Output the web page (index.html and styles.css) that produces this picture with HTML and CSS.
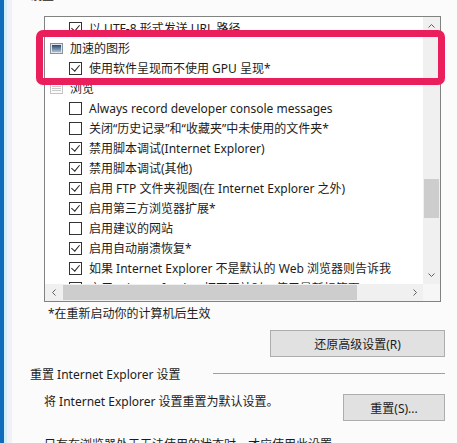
FILE: index.html
```html
<!DOCTYPE html>
<html lang="zh-CN">

<head>
    <meta charset="UTF-8">
    <meta name="viewport" content="width=device-width, initial-scale=1.0">
    <title>Internet 选项 - 高级</title>
    <link rel="stylesheet" href="styles.css">
</head>

<body>
    <div class="screen">
        <div class="desk-edge"></div>

        <div class="dialog">
            <div class="group-label">设置</div>

            <!-- Settings list -->
            <div class="listbox">
                <div class="list">
                    <div class="row item"><span class="box checked"></span>以 UTF-8 形式发送 URL 路径</div>
                    <div class="row group">
                        <svg class="group-icon" width="13" height="11" viewBox="0 0 13 11">
                            <defs>
                                <linearGradient id="scr" x1="0" y1="0" x2="0" y2="1">
                                    <stop offset="0" stop-color="#2c4866" />
                                    <stop offset="1" stop-color="#a9bfd3" />
                                </linearGradient>
                            </defs>
                            <rect x="0.5" y="0.5" width="12" height="10" fill="#dfe5ea" stroke="#8393a2" />
                            <rect x="2" y="2" width="9" height="7" fill="url(#scr)" />
                        </svg>
                        加速的图形
                    </div>
                    <div class="row item"><span class="box checked"></span>使用软件呈现而不使用 GPU 呈现*</div>
                    <div class="row group">
                        <svg class="group-icon" width="13" height="11" viewBox="0 0 13 11">
                            <rect x="0.5" y="0.5" width="12" height="10" fill="#fafafa" stroke="#c4c4c4" />
                            <path d="M2 3.5h9M2 5.5h9M2 7.5h9" stroke="#c9c9c9" />
                        </svg>
                        浏览
                    </div>
                    <div class="row item"><span class="box"></span>Always record developer console messages</div>
                    <div class="row item"><span class="box"></span>关闭“历史记录”和“收藏夹”中未使用的文件夹*</div>
                    <div class="row item"><span class="box checked"></span>禁用脚本调试(Internet Explorer)</div>
                    <div class="row item"><span class="box checked"></span>禁用脚本调试(其他)</div>
                    <div class="row item"><span class="box checked"></span>启用 FTP 文件夹视图(在 Internet Explorer 之外)</div>
                    <div class="row item"><span class="box checked"></span>启用第三方浏览器扩展*</div>
                    <div class="row item"><span class="box"></span>启用建议的网站</div>
                    <div class="row item"><span class="box checked"></span>启用自动崩溃恢复*</div>
                    <div class="row item"><span class="box checked"></span>如果 Internet Explorer 不是默认的 Web 浏览器则告诉我</div>
                    <div class="row item"><span class="box"></span>启用 Microsoft Edge 打开网站时，使用最新标签页</div>
                </div>

                <div class="vscroll">
                    <svg class="arrow" width="7" height="4" viewBox="0 0 7 4"><path d="M0.5 3.5L3.5 0.5L6.5 3.5" fill="none" stroke="#606060" /></svg>
                    <div class="vtrack"><div class="vthumb"></div></div>
                    <svg class="arrow" width="7" height="4" viewBox="0 0 7 4"><path d="M0.5 0.5L3.5 3.5L6.5 0.5" fill="none" stroke="#606060" /></svg>
                </div>

                <div class="hscroll">
                    <svg class="arrow" width="4" height="7" viewBox="0 0 4 7"><path d="M3.5 0.5L0.5 3.5L3.5 6.5" fill="none" stroke="#606060" /></svg>
                    <div class="htrack"><div class="hthumb"></div></div>
                    <svg class="arrow" width="4" height="7" viewBox="0 0 4 7"><path d="M0.5 0.5L3.5 3.5L0.5 6.5" fill="none" stroke="#606060" /></svg>
                </div>

                <div class="corner"></div>

                <!-- highlight annotation -->
                <div class="highlight"></div>
            </div>

            <p class="note">*在重新启动你的计算机后生效</p>

            <div class="restore-row">
                <button class="btn btn-wide">还原高级设置(R)</button>
            </div>

            <div class="section-head">
                <span>重置 Internet Explorer 设置</span>
                <span class="rule"></span>
            </div>

            <div class="reset-row">
                <p>将 Internet Explorer 设置重置为默认设置。</p>
                <button class="btn btn-reset">重置(S)...</button>
            </div>

            <p class="hint">只有在浏览器处于无法使用的状态时，才应使用此设置。</p>
        </div>
    </div>
</body>

</html>
```

FILE: styles.css
```css
body {
    margin: 0;
    font-family: 'Noto Sans', 'Noto Sans CJK SC', sans-serif;
    font-size: 12px;
    color: #1c1c1c;
    background-color: #fbfbfb;
}

p {
    margin: 0;
}

.screen {
    display: flex;
    height: 443px;
    overflow: hidden;
}

.desk-edge {
    width: 12px;
    flex-shrink: 0;
    background: linear-gradient(to right, #0f6cbd 0 4px, #d4eef7 4px 7px, #f1eff8 7px 12px);
}

.dialog {
    flex: 1;
    padding: 0 12px 0 18px;
}

.group-label {
    margin-top: -12px;
    height: 16px;
    line-height: 16px;
}

/* list box */
.listbox {
    position: relative;
    margin: 12px 0 0 14px;
    width: 397px;
    height: 286px;
    box-sizing: border-box;
    border: 1px solid #828282;
    background-color: #ffffff;
    display: grid;
    grid-template-columns: 1fr 17px;
    grid-template-rows: 1fr 17px;
}

.list {
    overflow: hidden;
    padding-top: 1px;
    white-space: nowrap;
}

.row {
    height: 20px;
    display: flex;
    align-items: center;
    gap: 7px;
}

.row.item {
    padding-left: 24px;
}

.row.group {
    padding-left: 5px;
}

.box {
    width: 13px;
    height: 13px;
    box-sizing: border-box;
    border: 1px solid #333333;
    background-color: #ffffff;
    flex-shrink: 0;
    position: relative;
}

.box.checked::after {
    content: '';
    position: absolute;
    left: 3px;
    top: 0px;
    width: 4px;
    height: 7px;
    border: solid #222222;
    border-width: 0 1px 1px 0;
    transform: rotate(40deg);
}

.group-icon {
    flex-shrink: 0;
}

/* scrollbars */
.vscroll {
    background-color: #f0f0f0;
    display: flex;
    flex-direction: column;
    align-items: center;
}

.vscroll .arrow {
    margin: 7px 0;
}

.vtrack {
    flex: 1;
    width: 100%;
    position: relative;
}

.vthumb {
    position: absolute;
    left: 1px;
    right: 1px;
    top: 144px;
    height: 39px;
    background-color: #cdcdcd;
}

.hscroll {
    background-color: #f0f0f0;
    display: flex;
    align-items: center;
}

.hscroll .arrow {
    margin: 0 6px 0 7px;
}

.htrack {
    flex: 1;
    height: 100%;
    display: flex;
    align-items: center;
}

.hthumb {
    margin-left: 1px;
    width: 294px;
    height: 15px;
    background-color: #cdcdcd;
}

.corner {
    background-color: #f6f6f6;
}

.highlight {
    position: absolute;
    left: -9px;
    top: 13px;
    width: 409px;
    height: 55px;
    box-sizing: border-box;
    border: 7px solid #e91e5b;
    border-radius: 7px;
}

.note {
    margin: 4px 0 0 18px;
    line-height: 16px;
}

.restore-row {
    display: flex;
    justify-content: flex-end;
    margin-top: 8px;
}

.btn {
    font-family: inherit;
    font-size: 12px;
    color: #1c1c1c;
    background-color: #e1e1e1;
    border: 1px solid #adadad;
    height: 27px;
    padding: 0;
}

.btn-wide {
    width: 175px;
}

.btn-reset {
    width: 102px;
}

.section-head {
    display: flex;
    margin-top: 10px;
    line-height: 16px;
}

.rule {
    flex: 1;
    height: 1px;
    margin: 6px 0 0 32px;
    background-color: #a0a0a0;
}

.reset-row {
    display: flex;
    justify-content: space-between;
    margin-top: 11px;
}

.reset-row p {
    margin-left: 14px;
    line-height: 16px;
}

.hint {
    margin: 16px 0 0 14px;
    line-height: 16px;
}
```
